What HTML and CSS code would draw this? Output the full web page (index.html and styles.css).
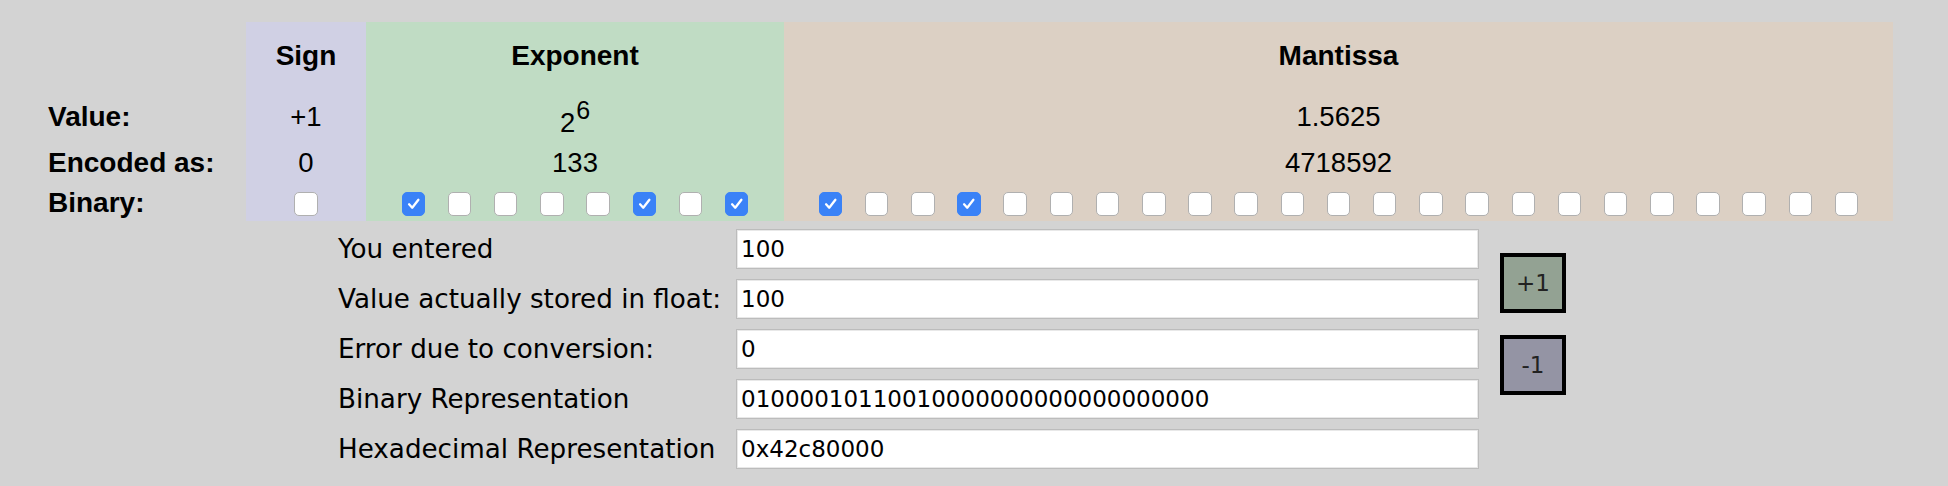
FILE: index.html
```html
<!DOCTYPE html>
<html>
<head>
<meta charset="utf-8">
<title>IEEE-754 Floating Point Converter</title>
<link rel="stylesheet" href="styles.css">
</head>
<body>
<div class="fields">
  <div class="col labels">
    <div class="cell head"></div>
    <div class="cell val">Value:</div>
    <div class="cell enc">Encoded as:</div>
    <div class="cell bin">Binary:</div>
  </div>
  <div class="col sign">
    <div class="cell head">Sign</div>
    <div class="cell val">+1</div>
    <div class="cell enc">0</div>
    <div class="cell bits"><span class="cb"></span></div>
  </div>
  <div class="col exponent">
    <div class="cell head">Exponent</div>
    <div class="cell val pow">2<sup>6</sup></div>
    <div class="cell enc">133</div>
    <div class="cell bits">
      <span class="cb on"><svg viewBox="0 0 24 24"><path d="M6.8 12.6 L10.3 16.4 L17.2 7.6"/></svg></span>
      <span class="cb"></span>
      <span class="cb"></span>
      <span class="cb"></span>
      <span class="cb"></span>
      <span class="cb on"><svg viewBox="0 0 24 24"><path d="M6.8 12.6 L10.3 16.4 L17.2 7.6"/></svg></span>
      <span class="cb"></span>
      <span class="cb on"><svg viewBox="0 0 24 24"><path d="M6.8 12.6 L10.3 16.4 L17.2 7.6"/></svg></span>
    </div>
  </div>
  <div class="col mantissa">
    <div class="cell head">Mantissa</div>
    <div class="cell val">1.5625</div>
    <div class="cell enc">4718592</div>
    <div class="cell bits">
      <span class="cb on"><svg viewBox="0 0 24 24"><path d="M6.8 12.6 L10.3 16.4 L17.2 7.6"/></svg></span>
      <span class="cb"></span>
      <span class="cb"></span>
      <span class="cb on"><svg viewBox="0 0 24 24"><path d="M6.8 12.6 L10.3 16.4 L17.2 7.6"/></svg></span>
      <span class="cb"></span>
      <span class="cb"></span>
      <span class="cb"></span>
      <span class="cb"></span>
      <span class="cb"></span>
      <span class="cb"></span>
      <span class="cb"></span>
      <span class="cb"></span>
      <span class="cb"></span>
      <span class="cb"></span>
      <span class="cb"></span>
      <span class="cb"></span>
      <span class="cb"></span>
      <span class="cb"></span>
      <span class="cb"></span>
      <span class="cb"></span>
      <span class="cb"></span>
      <span class="cb"></span>
      <span class="cb"></span>
    </div>
  </div>
</div>

<div class="convert">
  <div class="buttons">
    <button class="btn plus">+1</button>
    <button class="btn minus">-1</button>
  </div>
  <div class="lbl">You entered</div>
  <input class="field" type="text" value="100">
  <div class="lbl">Value actually stored in float:</div>
  <input class="field" type="text" value="100">
  <div class="lbl">Error due to conversion:</div>
  <input class="field" type="text" value="0">
  <div class="lbl">Binary Representation</div>
  <input class="field" type="text" value="01000010110010000000000000000000">
  <div class="lbl">Hexadecimal Representation</div>
  <input class="field" type="text" value="0x42c80000">
</div>
</body>
</html>
```

FILE: styles.css
```css
body {
  margin: 0;
  background: #d3d3d3;
  color: #000;
  font-family: "Liberation Sans", Arial, sans-serif;
}

.fields {
  display: flex;
  margin: 22px 0 0 40px;
}

.col {
  display: flex;
  flex-direction: column;
}

.labels {
  width: 206px;
  font-weight: bold;
}

.sign {
  width: 120px;
  background: #d0d0e4;
}

.exponent {
  width: 418px;
  background: #c0dcc4;
}

.mantissa {
  width: 1109px;
  background: #dcd0c4;
}

.cell {
  box-sizing: border-box;
  font-size: 27.5px;
  text-align: center;
  white-space: nowrap;
}

.labels .cell {
  text-align: left;
  padding-left: 8px;
  font-size: 28px;
}

.head {
  height: 68px;
  line-height: 68px;
  font-weight: bold;
  font-size: 28px;
}

.val {
  height: 53px;
  line-height: 53px;
}

.val.pow {
  padding-top: 12px;
  line-height: 41px;
}

.pow sup {
  font-size: 25px;
  line-height: 0;
  vertical-align: 13px;
  margin-left: 1px;
}

.enc {
  height: 39px;
  line-height: 39px;
}

.bin {
  height: 39px;
  padding-top: 2px;
  line-height: 37px;
}

.bits {
  height: 39px;
  padding-top: 10px;
  display: flex;
  justify-content: center;
  align-items: flex-start;
  gap: 22.7px;
}

.cb {
  box-sizing: border-box;
  width: 23.5px;
  height: 23.5px;
  flex: none;
  border-radius: 5px;
  background: #fff;
  border: 1px solid #b0b0b0;
  display: flex;
}

.cb.on {
  background: #3a82f7;
  border-color: #3a82f7;
}

.cb svg {
  width: 100%;
  height: 100%;
  fill: none;
  stroke: #fff;
  stroke-width: 2.6;
  stroke-linecap: round;
  stroke-linejoin: round;
}

.convert {
  display: grid;
  grid-template-columns: 398px 743px auto;
  grid-auto-rows: 40px;
  row-gap: 10px;
  margin: 8px 0 0 338px;
}

.lbl {
  grid-column: 1;
  font-family: "DejaVu Sans", Verdana, sans-serif;
  font-size: 26.2px;
  line-height: 40px;
  white-space: nowrap;
}

.field {
  grid-column: 2;
  box-sizing: border-box;
  width: 743px;
  height: 40px;
  margin: 0;
  padding: 0 4px;
  border: 1px solid #bcbcbc;
  box-shadow: inset 0 0 0 1px #e8e8e8;
  background: #fff;
  color: #000;
  font-family: "DejaVu Sans", Verdana, sans-serif;
  font-size: 23px;
  outline: none;
}

.buttons {
  grid-column: 3;
  grid-row: 1 / 5;
  align-self: center;
  display: flex;
  flex-direction: column;
  gap: 22px;
  margin-left: 21px;
}

.btn {
  box-sizing: border-box;
  width: 66px;
  height: 60px;
  margin: 0;
  padding: 0;
  border: 4px solid #000;
  border-radius: 0;
  color: #222;
  font-family: "DejaVu Sans", Verdana, sans-serif;
  font-size: 23px;
}

.plus {
  background: #93a293;
}

.minus {
  background: #9494a4;
}
```
